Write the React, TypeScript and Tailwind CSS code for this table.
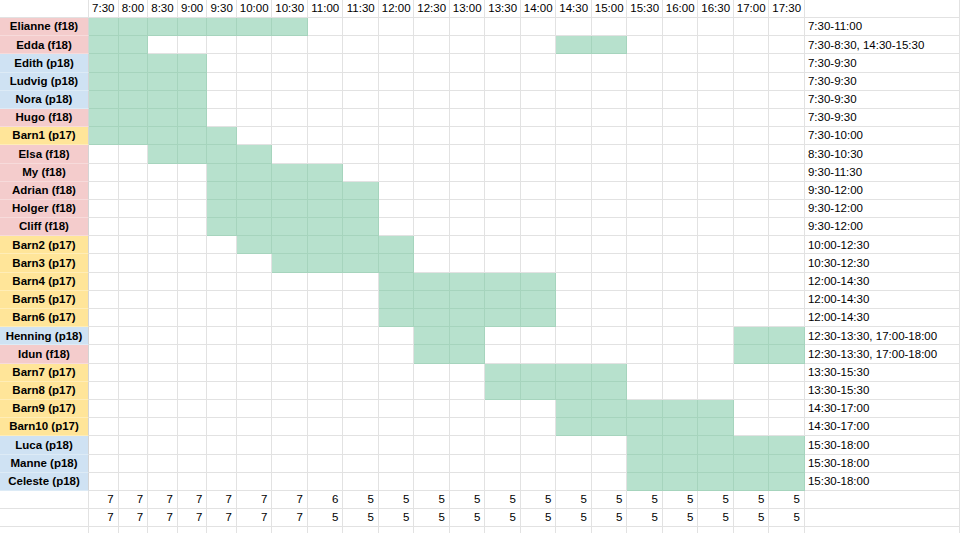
import React from 'react'

type Kind = 'f18' | 'p18' | 'p17'

interface Person {
  name: string
  kind: Kind
  hours: string
}

const times = [
  '7:30', '8:00', '8:30', '9:00', '9:30', '10:00', '10:30', '11:00', '11:30', '12:00', '12:30',
  '13:00', '13:30', '14:00', '14:30', '15:00', '15:30', '16:00', '16:30', '17:00', '17:30',
]

const people: Person[] = [
  { name: 'Elianne', kind: 'f18', hours: '7:30-11:00' },
  { name: 'Edda', kind: 'f18', hours: '7:30-8:30, 14:30-15:30' },
  { name: 'Edith', kind: 'p18', hours: '7:30-9:30' },
  { name: 'Ludvig', kind: 'p18', hours: '7:30-9:30' },
  { name: 'Nora', kind: 'p18', hours: '7:30-9:30' },
  { name: 'Hugo', kind: 'f18', hours: '7:30-9:30' },
  { name: 'Barn1', kind: 'p17', hours: '7:30-10:00' },
  { name: 'Elsa', kind: 'f18', hours: '8:30-10:30' },
  { name: 'My', kind: 'f18', hours: '9:30-11:30' },
  { name: 'Adrian', kind: 'f18', hours: '9:30-12:00' },
  { name: 'Holger', kind: 'f18', hours: '9:30-12:00' },
  { name: 'Cliff', kind: 'f18', hours: '9:30-12:00' },
  { name: 'Barn2', kind: 'p17', hours: '10:00-12:30' },
  { name: 'Barn3', kind: 'p17', hours: '10:30-12:30' },
  { name: 'Barn4', kind: 'p17', hours: '12:00-14:30' },
  { name: 'Barn5', kind: 'p17', hours: '12:00-14:30' },
  { name: 'Barn6', kind: 'p17', hours: '12:00-14:30' },
  { name: 'Henning', kind: 'p18', hours: '12:30-13:30, 17:00-18:00' },
  { name: 'Idun', kind: 'f18', hours: '12:30-13:30, 17:00-18:00' },
  { name: 'Barn7', kind: 'p17', hours: '13:30-15:30' },
  { name: 'Barn8', kind: 'p17', hours: '13:30-15:30' },
  { name: 'Barn9', kind: 'p17', hours: '14:30-17:00' },
  { name: 'Barn10', kind: 'p17', hours: '14:30-17:00' },
  { name: 'Luca', kind: 'p18', hours: '15:30-18:00' },
  { name: 'Manne', kind: 'p18', hours: '15:30-18:00' },
  { name: 'Celeste', kind: 'p18', hours: '15:30-18:00' },
]

const counts = [
  [7, 7, 7, 7, 7, 7, 7, 6, 5, 5, 5, 5, 5, 5, 5, 5, 5, 5, 5, 5, 5],
  [7, 7, 7, 7, 7, 7, 7, 5, 5, 5, 5, 5, 5, 5, 5, 5, 5, 5, 5, 5, 5],
]

const kindBg: Record<Kind, string> = {
  f18: 'bg-[#f4cccc]',
  p18: 'bg-[#cfe2f3]',
  p17: 'bg-[#ffe599]',
}

// half-hour slot index counted from 7:30
const slot = (t: string): number => {
  const [h, m] = t.split(':').map(Number)
  return (h * 60 + m - 450) / 30
}

const isWorking = (hours: string, i: number): boolean =>
  hours.split(', ').some((range) => {
    const [from, to] = range.split('-')
    return i >= slot(from) && i < slot(to)
  })

const cell = 'flex items-center border-b border-r border-[#e2e2e2] overflow-hidden whitespace-nowrap'

export default function App() {
  return (
    <div className="h-[533px] w-[960px] overflow-hidden bg-white">
      <div className="grid grid-cols-[89px_repeat(5,29.6px)_repeat(16,35.5px)_1fr] grid-rows-[18px_repeat(29,18.2px)] font-['Liberation_Sans',Arial,sans-serif] text-[11.5px] leading-none text-black">
        {/* header */}
        <div className={cell} />
        {times.map((t) => (
          <div key={t} className={`${cell} justify-center pt-[1px]`}>
            {t}
          </div>
        ))}
        <div className={cell} />

        {people.map((p) => (
          <React.Fragment key={p.name}>
            <div
              className={`flex items-center justify-center border-b border-r border-b-white/30 border-r-[#d4d4d4] pt-[1px] font-bold ${kindBg[p.kind]}`}
            >
              {p.name} ({p.kind})
            </div>
            {times.map((t, i) =>
              isWorking(p.hours, i) ? (
                <div key={t} className="border-b border-r border-[#a6d4bd] bg-[#b7e1cd]" />
              ) : (
                <div key={t} className={cell} />
              ),
            )}
            <div className={`${cell} pl-[3px] pt-[1px]`}>{p.hours}</div>
          </React.Fragment>
        ))}

        {counts.map((row, r) => (
          <React.Fragment key={r}>
            <div className={cell} />
            {row.map((n, i) => (
              <div key={i} className={`${cell} justify-end pr-[4px] pt-[1px]`}>
                {n}
              </div>
            ))}
            <div className={cell} />
          </React.Fragment>
        ))}

        <div className={cell} />
        {times.map((t) => (
          <div key={t} className={cell} />
        ))}
        <div className={cell} />
      </div>
    </div>
  )
}
